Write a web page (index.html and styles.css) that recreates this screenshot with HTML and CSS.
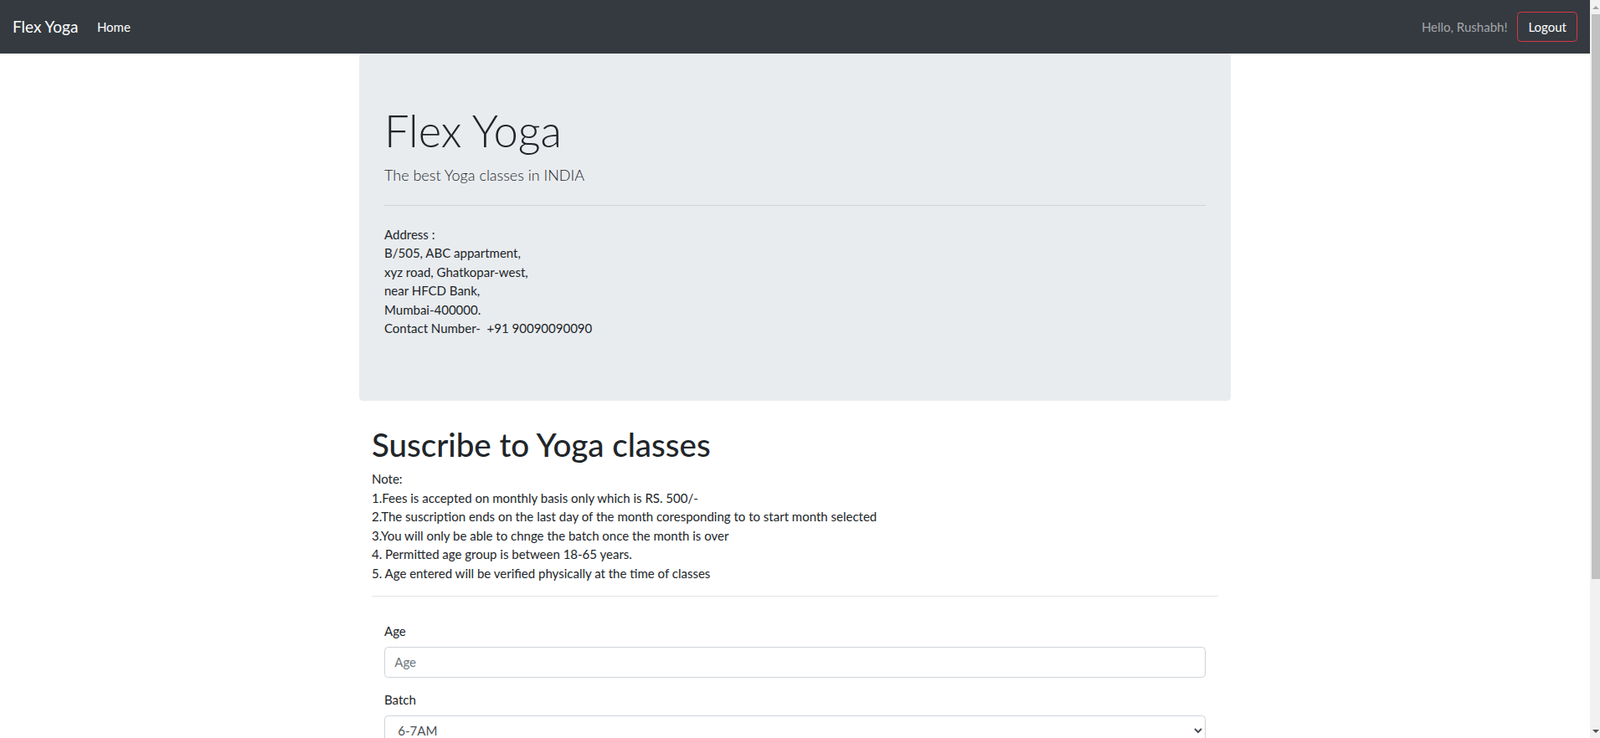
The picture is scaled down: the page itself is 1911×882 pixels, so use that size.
FILE: index.html
```html
<!DOCTYPE html>
<html lang="en">
<head>
<meta charset="utf-8">
<title>Flex Yoga</title>
<link rel="stylesheet" href="styles.css">
</head>
<body>
<nav class="navbar">
  <a class="brand" href="#">Flex Yoga</a>
  <a class="nav-link" href="#">Home</a>
  <div class="nav-right">
    <span class="greet">Hello, Rushabh!</span>
    <button class="logout" type="button">Logout</button>
  </div>
</nav>
<div class="page">
  <div class="jumbotron">
    <h1 class="display">Flex Yoga</h1>
    <p class="lead">The best Yoga classes in INDIA</p>
    <hr class="jhr">
    <p class="address">Address :<br>B/505, ABC appartment,<br>xyz road, Ghatkopar-west,<br>near HFCD Bank,<br>Mumbai-400000.<br>Contact Number-&nbsp; +91 90090090090</p>
  </div>
  <div class="content">
    <h1 class="title">Suscribe to Yoga classes</h1>
    <div class="notes">Note:<br>1.Fees is accepted on monthly basis only which is RS. 500/-<br>2.The suscription ends on the last day of the month coresponding to to start month selected<br>3.You will only be able to chnge the batch once the month is over<br>4. Permitted age group is between 18-65 years.<br>5. Age entered will be verified physically at the time of classes</div>
    <hr class="divider">
    <form class="form">
      <div class="group">
        <label class="label" for="age">Age</label>
        <input class="control" id="age" type="text" placeholder="Age">
      </div>
      <div class="group">
        <label class="label" for="batch">Batch</label>
        <select class="control" id="batch">
          <option>6-7AM</option>
          <option>7-8AM</option>
          <option>8-9AM</option>
          <option>5-6PM</option>
        </select>
      </div>
    </form>
  </div>
</div>
<div class="scrollbar" aria-hidden="true">
  <span class="sb-btn"><span class="sb-arrow sb-up"></span></span>
  <span class="sb-thumb"></span>
  <span class="sb-fill"></span>
  <span class="sb-btn"><span class="sb-arrow sb-down"></span></span>
</div>
</body>
</html>
```
FILE: styles.css
```css
html {
  font-size: 15px;
}

body {
  margin: 0 12px 0 0;
  font-family: Lato, "Liberation Sans", sans-serif;
  font-size: 15px;
  line-height: 1.5;
  color: #212529;
  background: #fff;
}

/* navbar */
.navbar {
  display: flex;
  align-items: center;
  height: 64px;
  padding: 0 15px;
  background: #343a40;
  box-sizing: border-box;
}

.brand {
  font-size: 19px;
  color: #fff;
  text-decoration: none;
  margin-right: 15px;
}

.nav-link {
  color: #fff;
  text-decoration: none;
  padding: 0 7.5px;
}

.nav-right {
  margin-left: auto;
  display: flex;
  align-items: center;
  gap: 12px;
}

.greet {
  color: #a4a6a9;
}

.logout {
  font: inherit;
  color: #fff;
  background: transparent;
  border: 1px solid #dc3545;
  border-radius: 4.5px;
  height: 36.5px;
  padding: 0 12px;
}

/* page */
.page {
  width: 1041px;
  margin: 0 auto;
}

.jumbotron {
  background: #e9ecef;
  border-radius: 4.5px;
  padding: 60px 30px;
  margin-bottom: 30px;
}

.display {
  font-size: 52.5px;
  font-weight: 300;
  line-height: 1.2;
  margin: 0 0 7.5px;
}

.lead {
  font-size: 18px;
  font-weight: 300;
  line-height: 28px;
  margin: 0 0 15px;
}

.jhr {
  margin: 22.5px 0;
  border: 0;
  border-top: 1px solid rgba(0, 0, 0, 0.1);
}

.address {
  margin: 0 0 15px;
}

.content {
  padding: 0 15px;
}

.title {
  font-size: 38.5px;
  font-weight: 500;
  line-height: 45px;
  margin: 0 0 7.5px;
}

.divider {
  margin: 16px 0 30px;
  border: 0;
  border-top: 1px solid rgba(0, 0, 0, 0.1);
}

.form {
  padding: 0 15px;
}

.group {
  margin-bottom: 15px;
}

.label {
  display: block;
  margin-bottom: 7.5px;
}

.control {
  display: block;
  width: 100%;
  box-sizing: border-box;
  height: 36.5px;
  padding: 5.6px 11.25px;
  font: inherit;
  color: #495057;
  background: #fff;
  border: 1px solid #ced4da;
  border-radius: 4.5px;
}

.control::placeholder {
  color: #6c757d;
}

/* browser scrollbar drawn over the right edge */
.scrollbar {
  position: fixed;
  top: 0;
  right: 0;
  width: 12px;
  height: 100vh;
  background: #f1f1f1;
  display: flex;
  flex-direction: column;
  align-items: flex-end;
}

.sb-btn {
  width: 10px;
  height: 17px;
  display: flex;
  align-items: center;
  justify-content: center;
}

.sb-arrow {
  width: 0;
  height: 0;
  border-left: 4px solid transparent;
  border-right: 4px solid transparent;
}

.sb-up {
  border-bottom: 4px solid #a3a3a3;
}

.sb-down {
  border-top: 4px solid #505050;
}

.sb-thumb {
  width: 10px;
  height: 675px;
  background: #c1c1c1;
}

.sb-fill {
  flex: 1;
}
```
